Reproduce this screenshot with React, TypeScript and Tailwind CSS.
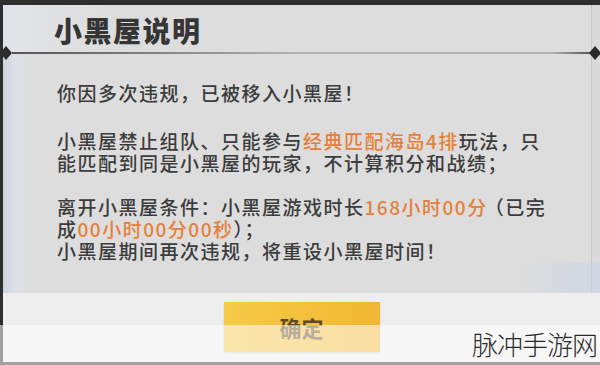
export default function App() {
  const orange = "text-[#e5803b]";
  return (
    <div className="relative w-[600px] h-[365px] overflow-hidden bg-[#2e2e2e] pt-[5px] pl-[3px] pb-[3px] flex font-['Noto_Sans_CJK_SC',sans-serif]">
      <div className="relative flex-1 flex flex-col bg-[#dddddd]">
        {/* left decorative strip */}
        <div className="absolute left-0 top-0 w-[26px] h-[288px] bg-gradient-to-r from-[#d0d4df] via-[#dde0e7] to-[#dddddd]" />
        <div className="absolute left-0 top-0 w-[110px] h-[48px] bg-gradient-to-r from-[#e4e6eb] to-[#dddddd] opacity-80" />
        <div className="relative flex-1 flex">
          <div className="flex-1 flex flex-col">
            <div className="h-[47px] pl-[51px] pt-[10px]">
              <h1 className="text-[28px] leading-[30px] font-black tracking-[1.5px] text-[#353535]">小黑屋说明</h1>
            </div>
            <div className="relative h-[2px] ml-[9px] bg-gradient-to-r from-[#555555] via-[#b4b4b4] to-[#b4b4b4]">
              <svg className="absolute left-[-12px] top-[-6px]" width="12" height="14" viewBox="0 0 12 14">
                <polygon points="0,7 6,0 12,7 6,14" fill="#2b2b2b" />
              </svg>
              <div className="absolute right-0 top-0 w-[40px] h-[2px] bg-gradient-to-r from-[#b4b4b4] to-[#555555]" />
              <svg className="absolute right-[-10px] top-[-6px]" width="12" height="14" viewBox="0 0 12 14">
                <polygon points="0,7 6,0 12,7 6,14" fill="#2b2b2b" />
              </svg>
            </div>
            <div className="pl-[54px] pt-[28px] text-[19px] leading-[22px] tracking-[1.5px] font-medium text-[#3c3c3c] whitespace-nowrap">
              <p className="mb-[26px]">你因多次违规，已被移入小黑屋！</p>
              <p className="mb-[22px]">
                小黑屋禁止组队、只能参与<span className={orange}>经典匹配海岛4排</span>玩法，只<br />能匹配到同是小黑屋的玩家，不计算积分和战绩；
              </p>
              <p>
                离开小黑屋条件：小黑屋游戏时长<span className={orange}>168小时00分</span><span className="-ml-[3px]">（</span>已完<br />成<span className={orange}>00小时00分00秒</span>）；
              </p>
              <p>小黑屋期间再次违规，将重设小黑屋时间！</p>
            </div>
          </div>
          <div className="w-[9px] border-l border-[#c6c6c6] bg-[#dadada]" />
        </div>
        <div className="relative h-[69px] bg-[#eeeeee] flex justify-center pt-[9px]">
          <div className="absolute right-0 top-[-30px] w-[80px] h-[30px] bg-gradient-to-r from-transparent to-[#c9d6e6] opacity-70" />
          <button className="w-[156px] h-[50px] bg-gradient-to-r from-[#f6cb45] to-[#f2b634] shadow-[0_1px_2px_rgba(0,0,0,0.15)] text-[22px] font-bold text-[#5e4a26] flex items-center justify-center">
            确定
          </button>
        </div>
      </div>
      <div className="absolute left-0 right-0 top-[325px] bottom-0 bg-white/55" />
      <div className="absolute right-[3px] top-[328px] text-[26px] leading-[32px] tracking-[-1px] text-[#2a2a2a] font-light">
        脉冲手游网
      </div>
    </div>
  );
}
